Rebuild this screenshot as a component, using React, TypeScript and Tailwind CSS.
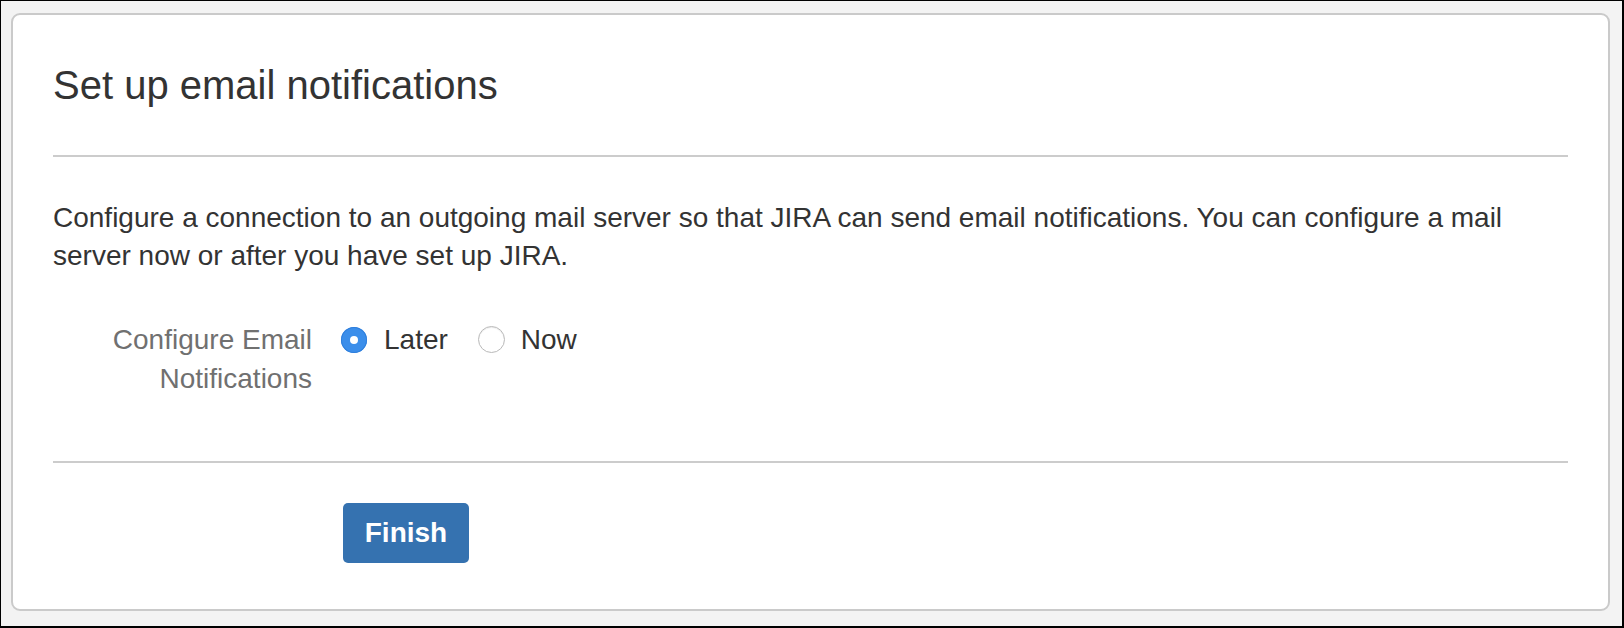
import React from "react";

function Radio({ checked }: { checked: boolean }) {
  if (checked) {
    return (
      <span className="flex h-[26px] w-[26px] items-center justify-center rounded-full bg-[#3b8eea] shadow-[inset_0_0_0_1px_#2f7fdc]">
        <span className="h-[8px] w-[8px] rounded-full bg-white" />
      </span>
    );
  }
  return (
    <span className="block h-[27px] w-[27px] rounded-full border border-[#b9b9b9] bg-white shadow-[inset_0_1px_1px_rgba(0,0,0,0.08)]" />
  );
}

export default function App() {
  return (
    <div
      className="box-border h-[628px] w-[1624px] border-t border-l border-r-2 border-b-2 border-black bg-[#f3f3f3] pt-[12px] pl-[10px] pr-[12px] pb-[15px]"
      style={{ fontFamily: '"Liberation Sans", Arial, sans-serif' }}
    >
      <div className="box-border h-[598px] rounded-[9px] border-2 border-[#cacaca] bg-white px-[40px] pt-[46px] pb-[46px] text-[#333333]">
        <h1 className="text-[40px] leading-[48px] font-normal">Set up email notifications</h1>
        <div className="mt-[46px] h-[2px] bg-[#cccccc]" />
        <p className="mt-[42px] text-[28px] leading-[38px]">
          Configure a connection to an outgoing mail server so that JIRA can send email notifications. You can configure a mail server now or after you have set up JIRA.
        </p>
        <div className="mt-[45px] flex items-start">
          <div className="w-[259px] text-right text-[28px] leading-[39px] text-[#707070]">
            Configure Email
            <br />
            Notifications
          </div>
          <div className="ml-[29px] flex h-[39px] items-center text-[28px] leading-[39px]">
            <Radio checked />
            <span className="ml-[17px]">Later</span>
            <span className="ml-[30px]">
              <Radio checked={false} />
            </span>
            <span className="ml-[16px]">Now</span>
          </div>
        </div>
        <div className="mt-[63px] h-[2px] bg-[#cccccc]" />
        <div className="mt-[40px] pl-[290px]">
          <button className="h-[60px] w-[126px] rounded-[5px] bg-[#3572b0] text-[28px] font-bold text-white">
            Finish
          </button>
        </div>
      </div>
    </div>
  );
}
